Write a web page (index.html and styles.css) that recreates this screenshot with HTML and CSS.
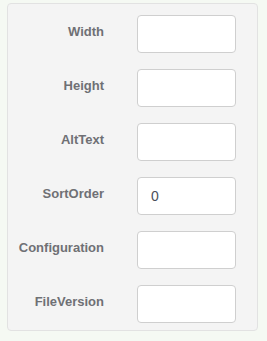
FILE: index.html
```html
<!DOCTYPE html>
<html>
	<head>
		<meta charset="utf-8">
		<title>Image properties</title>
		<link rel="stylesheet" href="styles.css">
	</head>
	<body>
		<div class="panel">
			<div class="row">
				<label class="lbl">Width</label>
				<input class="fld" type="text" value="">
			</div>
			<div class="row">
				<label class="lbl">Height</label>
				<input class="fld" type="text" value="">
			</div>
			<div class="row">
				<label class="lbl">AltText</label>
				<input class="fld" type="text" value="">
			</div>
			<div class="row">
				<label class="lbl">SortOrder</label>
				<input class="fld" type="text" value="0">
			</div>
			<div class="row">
				<label class="lbl">Configuration</label>
				<input class="fld" type="text" value="">
			</div>
			<div class="row">
				<label class="lbl">FileVersion</label>
				<input class="fld" type="text" value="">
			</div>
		</div>
	</body>
</html>
```

FILE: styles.css
```css
*{
    margin: 0;
    padding: 0;
    box-sizing: border-box;
}
body{
    background-color: #f5f9f3;
    font: 13px/16px "Liberation Sans", Arial, sans-serif;
    padding: 3px 0 0 7px;
}
.panel{
    width: 251px;
    height: 328px;
    background-color: #f4f4f4;
    border: 1px solid #e2e2e2;
    border-radius: 4px;
    padding-top: 11px;
    display: flex;
    flex-direction: column;
    gap: 16px;
}
.row{
    display: grid;
    grid-template-columns: 97px 99px;
    column-gap: 32px;
    align-items: start;
}
.lbl{
    text-align: right;
    font-weight: bold;
    color: #6f7074;
    padding-top: 9px;
    padding-right: 1px;
}
.fld{
    width: 99px;
    height: 38px;
    border: 1px solid #cfcfcf;
    border-radius: 4px;
    background-color: #fff;
    padding: 0 13px;
    font: 14px "Liberation Sans", Arial, sans-serif;
    color: #4a4f5a;
    outline: none;
}
```
